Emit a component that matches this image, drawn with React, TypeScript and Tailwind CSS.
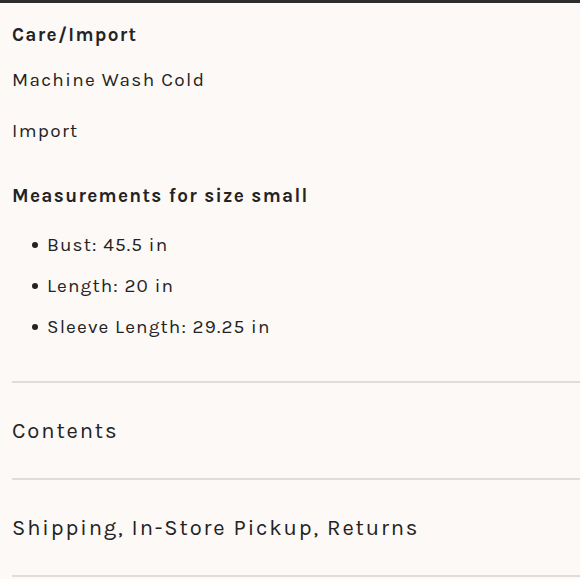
import React from "react";

const font = { fontFamily: '"Karla", "Lato", "Noto Sans", sans-serif' };

export default function App() {
  return (
    <div className="min-h-[579px] w-[580px] overflow-hidden border-t-[3px] border-[#2d2d2d] bg-[#fdf9f7] text-[#232323]" style={font}>
      <div className="pl-3">
        <div className="pt-[20px]">
          <p className="text-[19px] font-bold leading-[24px] tracking-[0.07em]">Care/Import</p>
          <p className="mt-[21px] text-[19px] leading-[24px] tracking-[0.07em]">Machine Wash Cold</p>
          <p className="mt-[27px] text-[19px] leading-[24px] tracking-[0.07em]">Import</p>
          <p className="mt-[41px] text-[19px] font-bold leading-[24px] tracking-[0.07em]">Measurements for size small</p>
          <ul className="mt-[25px] flex flex-col gap-[17px] pl-[20px] text-[19px] leading-[24px] tracking-[0.06em]">
            <li className="flex items-center gap-[9px]"><span className="h-[6px] w-[6px] rounded-full bg-[#232323]" />Bust: 45.5 in</li>
            <li className="flex items-center gap-[9px]"><span className="h-[6px] w-[6px] rounded-full bg-[#232323]" />Length: 20 in</li>
            <li className="flex items-center gap-[9px]"><span className="h-[6px] w-[6px] rounded-full bg-[#232323]" />Sleeve Length: 29.25 in</li>
          </ul>
        </div>
        <div className="mt-[42px] w-[600px]">
          {["Contents", "Shipping, In-Store Pickup, Returns"].map((t) => (
            <div key={t} className="flex h-[97px] items-center justify-between border-t-2 border-[#e0dcd9] pr-[11px]">
              <span className="text-[22px] leading-[28px] tracking-[0.085em]">{t}</span>
              <span className="relative h-[10px] w-[10px]">
                <span className="absolute left-0 top-[4px] h-[1.5px] w-[10px] bg-[#555]" />
                <span className="absolute left-[4px] top-0 h-[10px] w-[1.5px] bg-[#555]" />
              </span>
            </div>
          ))}
          <div className="border-t-2 border-[#e0dcd9]" />
        </div>
      </div>
    </div>
  );
}
